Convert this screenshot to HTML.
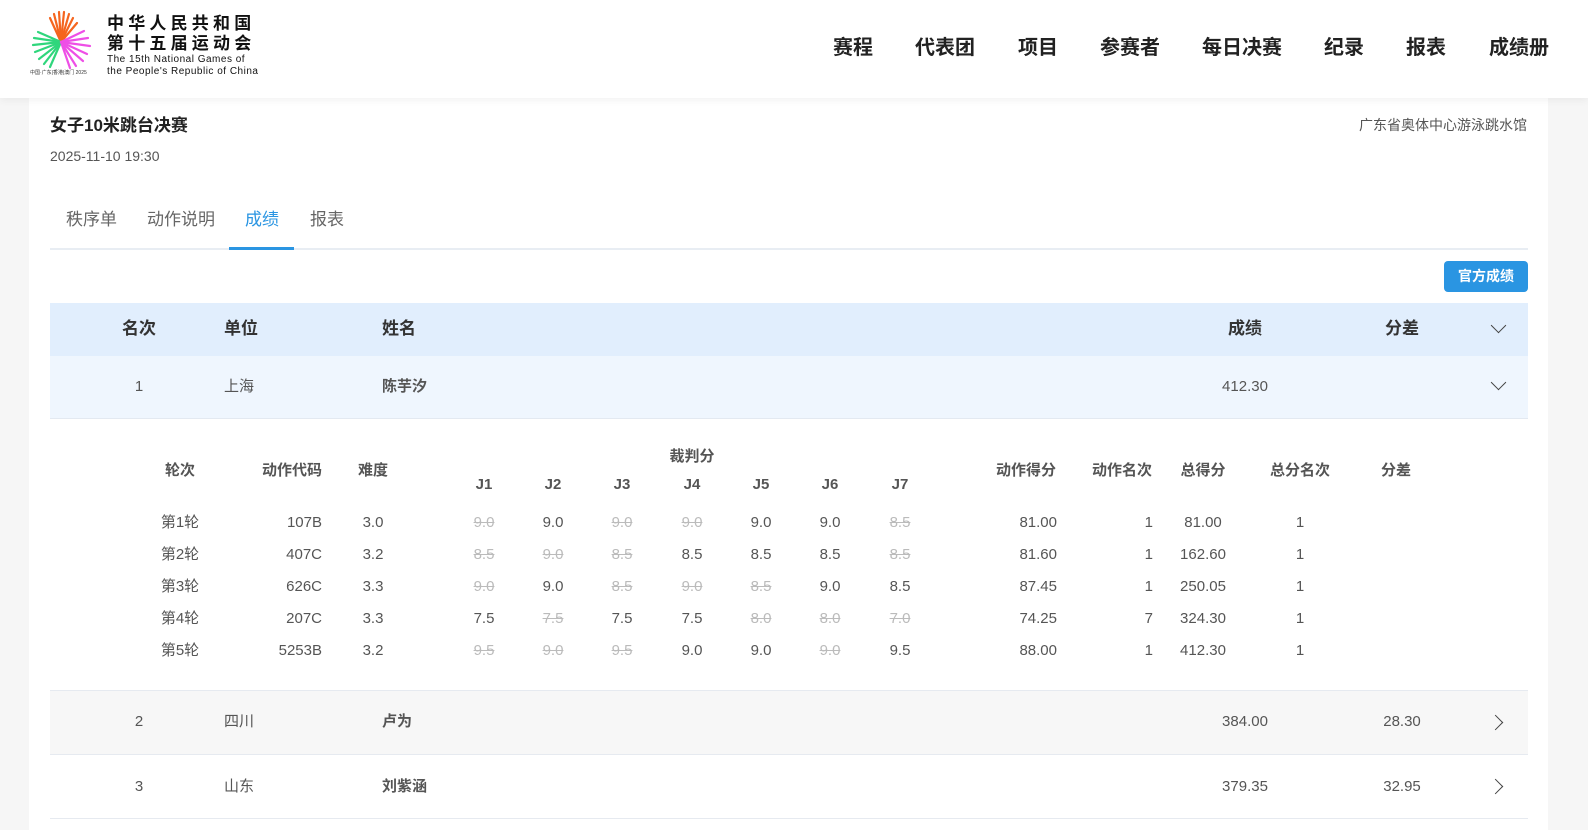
<!DOCTYPE html>
<html><head><meta charset="utf-8"><style>
*{margin:0;padding:0;box-sizing:border-box}
body{width:1588px;height:830px;overflow:hidden;background:#f6f6f6;font-family:"Liberation Sans","Noto Sans CJK SC",sans-serif;position:relative;color:#333}
.a{position:absolute;white-space:nowrap;line-height:20px}
.c{transform:translateX(-50%)}
.r{transform:translateX(-100%)}
#hdr{position:absolute;left:0;top:0;width:1588px;height:98px;background:#fff;box-shadow:0 2px 8px rgba(0,0,0,.06);z-index:2}
.nav{font-size:20px;font-weight:bold;color:#222;top:38px}
#card{position:absolute;left:29px;top:98px;width:1519px;height:732px;background:#fff}
.tb{font-size:17px;color:#666;top:210px}
.dh{font-size:15px;font-weight:bold;color:#555}
.dv{font-size:15px;color:#555}
.s{color:#bbb;text-decoration:line-through}
.chev{position:absolute;width:11px;height:11px;border-right:1.6px solid #444;border-bottom:1.6px solid #444}
</style></head><body>
<div id="hdr">
<svg class="a" style="left:30px;top:10px" width="64" height="68" viewBox="0 0 64 68">
<g stroke-width="2.2" stroke-linecap="round">
<g stroke="#f5651e"><line x1="31" y1="32" x2="24" y2="4"/><line x1="31" y1="32" x2="29" y2="2"/><line x1="31" y1="32" x2="34" y2="2"/><line x1="31" y1="32" x2="39" y2="4"/><line x1="31" y1="32" x2="43" y2="8"/><line x1="31" y1="32" x2="20" y2="8"/><line x1="31" y1="32" x2="47" y2="13"/></g>
<g stroke="#2fd67c"><line x1="31" y1="32" x2="4" y2="28"/><line x1="31" y1="32" x2="3" y2="35"/><line x1="31" y1="32" x2="5" y2="42"/><line x1="31" y1="32" x2="9" y2="49"/><line x1="31" y1="32" x2="14" y2="54"/><line x1="31" y1="32" x2="20" y2="57"/><line x1="31" y1="32" x2="8" y2="22"/></g>
<g stroke="#ee4fe6"><line x1="31" y1="32" x2="58" y2="28"/><line x1="31" y1="32" x2="60" y2="36"/><line x1="31" y1="32" x2="57" y2="44"/><line x1="31" y1="32" x2="53" y2="51"/><line x1="31" y1="32" x2="46" y2="56"/><line x1="31" y1="32" x2="40" y2="58"/><line x1="31" y1="32" x2="54" y2="21"/></g>
</g>
<text x="0" y="64" font-size="5" fill="#333" font-family="Liberation Sans,Noto Sans CJK SC,sans-serif">中国·广东|香港|澳门 2025</text>
</svg>
<div class="a" style="left:107px;top:14px;font-size:17px;font-weight:bold;letter-spacing:4.2px;line-height:20px;color:#111">中华人民共和国<br>第十五届运动会</div>
<div class="a" style="left:107px;top:54px;font-size:10px;line-height:12px;color:#111;letter-spacing:.5px">The 15th National Games of<br>the People's Republic of China</div>
<div class="a nav c" style="left:853px">赛程</div>
<div class="a nav c" style="left:945px">代表团</div>
<div class="a nav c" style="left:1038px">项目</div>
<div class="a nav c" style="left:1130px">参赛者</div>
<div class="a nav c" style="left:1242px">每日决赛</div>
<div class="a nav c" style="left:1344px">纪录</div>
<div class="a nav c" style="left:1426px">报表</div>
<div class="a nav c" style="left:1519px">成绩册</div>
</div>
<div id="card"></div>
<div class="a" style="left:50px;top:116px;font-size:17px;font-weight:bold;color:#222">女子10米跳台决赛</div>
<div class="a" style="left:50px;top:146px;font-size:14px;color:#555">2025-11-10 19:30</div>
<div class="a" style="left:1527px;top:115px;font-size:14px;color:#555;transform:translateX(-100%)">广东省奥体中心游泳跳水馆</div>
<div class="a tb" style="left:66px">秩序单</div>
<div class="a tb" style="left:147px">动作说明</div>
<div class="a tb" style="left:245px;color:#2a95e2">成绩</div>
<div class="a tb" style="left:310px">报表</div>
<div class="a" style="left:50px;top:248px;width:1478px;height:2px;background:#e8edf3"></div>
<div class="a" style="left:229px;top:247px;width:65px;height:3px;background:#2a95e2"></div>
<div class="a" style="left:1444px;top:261px;width:84px;height:31px;background:#2a95e2;border-radius:4px;color:#fff;font-size:14px;font-weight:bold;text-align:center;line-height:31px">官方成绩</div>
<div class="a" style="left:50px;top:303px;width:1478px;height:53px;background:#e1eefd"></div>
<div class="a" style="left:50px;top:356px;width:1478px;height:63px;background:#eff6fe;border-bottom:1px solid #e3e9f1"></div>
<div class="a" style="left:50px;top:690px;width:1478px;height:65px;background:#f7f7f7;border-top:1px solid #e6eaf0;border-bottom:1px solid #e6eaf0"></div>
<div class="a" style="left:50px;top:818px;width:1478px;height:1px;background:#e6eaf0"></div>
<div style="font-size:17px;font-weight:bold;color:#333">
<div class="a c" style="left:139px;top:319px">名次</div>
<div class="a" style="left:224px;top:319px">单位</div>
<div class="a" style="left:382px;top:319px">姓名</div>
<div class="a c" style="left:1245px;top:319px">成绩</div>
<div class="a c" style="left:1402px;top:319px">分差</div>
</div>
<div class="chev" style="left:1493px;top:320px;transform:rotate(45deg)"></div>
<div class="chev" style="left:1493px;top:377px;transform:rotate(45deg)"></div>
<div class="chev" style="left:1490px;top:717px;transform:rotate(-45deg)"></div>
<div class="chev" style="left:1490px;top:781px;transform:rotate(-45deg)"></div>
<div style="font-size:15px;color:#555">
<div class="a c" style="left:139px;top:377px">1</div><div class="a" style="left:224px;top:377px">上海</div><div class="a" style="left:382px;top:377px;font-weight:bold">陈芋汐</div><div class="a c" style="left:1245px;top:377px">412.30</div>
<div class="a c" style="left:139px;top:712px">2</div><div class="a" style="left:224px;top:712px">四川</div><div class="a" style="left:382px;top:712px;font-weight:bold">卢为</div><div class="a c" style="left:1245px;top:712px">384.00</div><div class="a c" style="left:1402px;top:712px">28.30</div>
<div class="a c" style="left:139px;top:777px">3</div><div class="a" style="left:224px;top:777px">山东</div><div class="a" style="left:382px;top:777px;font-weight:bold">刘紫涵</div><div class="a c" style="left:1245px;top:777px">379.35</div><div class="a c" style="left:1402px;top:777px">32.95</div>
</div>
<div class="dh">
<div class="a c" style="left:180px;top:461px">轮次</div>
<div class="a r" style="left:322px;top:461px">动作代码</div>
<div class="a c" style="left:373px;top:461px">难度</div>
<div class="a c" style="left:692px;top:447px">裁判分</div>
<div class="a c" style="left:484px;top:475px">J1</div><div class="a c" style="left:553px;top:475px">J2</div><div class="a c" style="left:622px;top:475px">J3</div><div class="a c" style="left:692px;top:475px">J4</div><div class="a c" style="left:761px;top:475px">J5</div><div class="a c" style="left:830px;top:475px">J6</div><div class="a c" style="left:900px;top:475px">J7</div>
<div class="a c" style="left:1026px;top:461px">动作得分</div>
<div class="a c" style="left:1122px;top:461px">动作名次</div>
<div class="a c" style="left:1203px;top:461px">总得分</div>
<div class="a c" style="left:1300px;top:461px">总分名次</div>
<div class="a c" style="left:1396px;top:461px">分差</div>
</div>
<div class="dv">
<div class="a c" style="left:180px;top:513px">第1轮</div><div class="a r" style="left:322px;top:513px">107B</div><div class="a c" style="left:373px;top:513px">3.0</div>
<div class="a c s" style="left:484px;top:513px">9.0</div><div class="a c" style="left:553px;top:513px">9.0</div><div class="a c s" style="left:622px;top:513px">9.0</div><div class="a c s" style="left:692px;top:513px">9.0</div><div class="a c" style="left:761px;top:513px">9.0</div><div class="a c" style="left:830px;top:513px">9.0</div><div class="a c s" style="left:900px;top:513px">8.5</div>
<div class="a r" style="left:1057px;top:513px">81.00</div><div class="a r" style="left:1153px;top:513px">1</div><div class="a c" style="left:1203px;top:513px">81.00</div><div class="a c" style="left:1300px;top:513px">1</div>

<div class="a c" style="left:180px;top:545px">第2轮</div><div class="a r" style="left:322px;top:545px">407C</div><div class="a c" style="left:373px;top:545px">3.2</div>
<div class="a c s" style="left:484px;top:545px">8.5</div><div class="a c s" style="left:553px;top:545px">9.0</div><div class="a c s" style="left:622px;top:545px">8.5</div><div class="a c" style="left:692px;top:545px">8.5</div><div class="a c" style="left:761px;top:545px">8.5</div><div class="a c" style="left:830px;top:545px">8.5</div><div class="a c s" style="left:900px;top:545px">8.5</div>
<div class="a r" style="left:1057px;top:545px">81.60</div><div class="a r" style="left:1153px;top:545px">1</div><div class="a c" style="left:1203px;top:545px">162.60</div><div class="a c" style="left:1300px;top:545px">1</div>

<div class="a c" style="left:180px;top:577px">第3轮</div><div class="a r" style="left:322px;top:577px">626C</div><div class="a c" style="left:373px;top:577px">3.3</div>
<div class="a c s" style="left:484px;top:577px">9.0</div><div class="a c" style="left:553px;top:577px">9.0</div><div class="a c s" style="left:622px;top:577px">8.5</div><div class="a c s" style="left:692px;top:577px">9.0</div><div class="a c s" style="left:761px;top:577px">8.5</div><div class="a c" style="left:830px;top:577px">9.0</div><div class="a c" style="left:900px;top:577px">8.5</div>
<div class="a r" style="left:1057px;top:577px">87.45</div><div class="a r" style="left:1153px;top:577px">1</div><div class="a c" style="left:1203px;top:577px">250.05</div><div class="a c" style="left:1300px;top:577px">1</div>

<div class="a c" style="left:180px;top:609px">第4轮</div><div class="a r" style="left:322px;top:609px">207C</div><div class="a c" style="left:373px;top:609px">3.3</div>
<div class="a c" style="left:484px;top:609px">7.5</div><div class="a c s" style="left:553px;top:609px">7.5</div><div class="a c" style="left:622px;top:609px">7.5</div><div class="a c" style="left:692px;top:609px">7.5</div><div class="a c s" style="left:761px;top:609px">8.0</div><div class="a c s" style="left:830px;top:609px">8.0</div><div class="a c s" style="left:900px;top:609px">7.0</div>
<div class="a r" style="left:1057px;top:609px">74.25</div><div class="a r" style="left:1153px;top:609px">7</div><div class="a c" style="left:1203px;top:609px">324.30</div><div class="a c" style="left:1300px;top:609px">1</div>

<div class="a c" style="left:180px;top:641px">第5轮</div><div class="a r" style="left:322px;top:641px">5253B</div><div class="a c" style="left:373px;top:641px">3.2</div>
<div class="a c s" style="left:484px;top:641px">9.5</div><div class="a c s" style="left:553px;top:641px">9.0</div><div class="a c s" style="left:622px;top:641px">9.5</div><div class="a c" style="left:692px;top:641px">9.0</div><div class="a c" style="left:761px;top:641px">9.0</div><div class="a c s" style="left:830px;top:641px">9.0</div><div class="a c" style="left:900px;top:641px">9.5</div>
<div class="a r" style="left:1057px;top:641px">88.00</div><div class="a r" style="left:1153px;top:641px">1</div><div class="a c" style="left:1203px;top:641px">412.30</div><div class="a c" style="left:1300px;top:641px">1</div>
</div>
</body></html>
